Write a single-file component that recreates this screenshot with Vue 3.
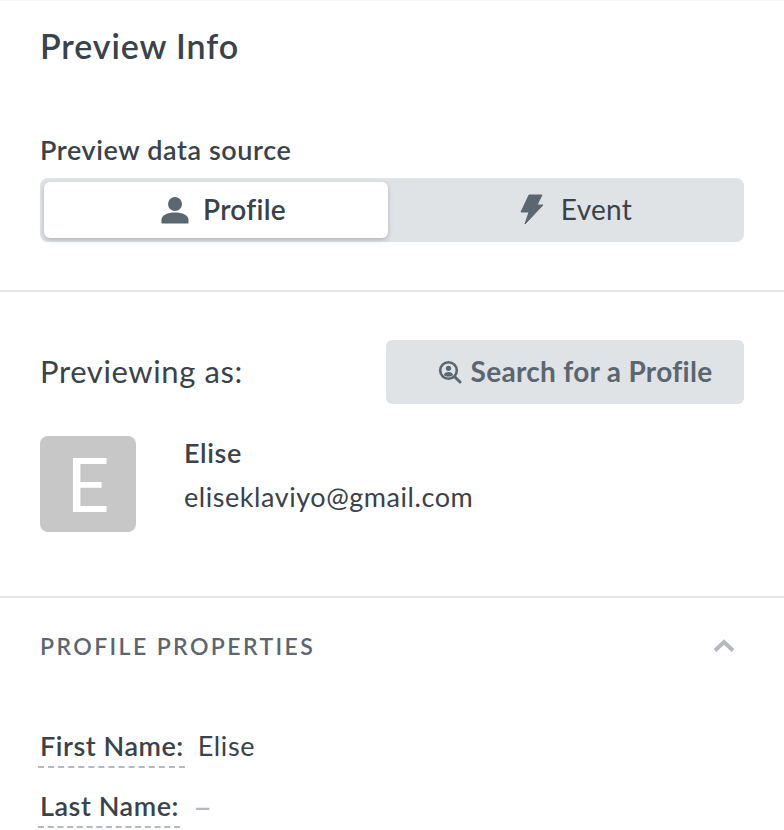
<script setup>
const props_ = [
  { label: 'First Name:', value: 'Elise', empty: false },
  { label: 'Last Name:', value: '–', empty: true },
]
</script>

<template>
  <div class="page">
    <section class="top">
      <h1 class="title">Preview Info</h1>
      <div class="field-label">Preview data source</div>
      <div class="toggle">
        <div class="opt active">
          <svg class="ico-person" viewBox="0 0 28 28" width="28" height="28">
            <circle cx="14" cy="8" r="7" fill="#5c6670" />
            <path d="M0.500 27.500v-3.600C0.500 19 6.500 16.400 14 16.400s13.500 2.600 13.500 7.500v3.600z" fill="#5c6670" />
          </svg>
          <span class="opt-text strong">Profile</span>
        </div>
        <div class="opt second">
          <svg class="ico-bolt" viewBox="0 0 24 32" width="24" height="32">
            <path d="M9 1H22L17 11H23L5 30L9 18H1Z" fill="#5c6670" stroke="#5c6670" stroke-linejoin="round" />
          </svg>
          <span class="opt-text">Event</span>
        </div>
      </div>
    </section>

    <section class="preview">
      <div class="preview-head">
        <span class="previewing">Previewing as:</span>
        <div class="search-btn">
          <svg class="ico-search" viewBox="0 0 24 24" width="24" height="24">
            <circle cx="10.500" cy="10.500" r="8.300" fill="none" stroke="#5c6670" stroke-width="2.600" />
            <circle cx="10.500" cy="8.300" r="2.600" fill="#5c6670" />
            <path d="M5.800 15c.5-2 2.500-3 4.700-3s4.200 1 4.700 3c-1.200 1-2.800 1.500-4.700 1.500S7 16 5.800 15z" fill="#5c6670" />
            <path d="M16.700 16.700l5.300 5.300" stroke="#5c6670" stroke-width="3" stroke-linecap="round" />
          </svg>
          <span class="search-text">Search for a Profile</span>
        </div>
      </div>
      <div class="person">
        <div class="avatar">E</div>
        <div class="person-info">
          <div class="person-name">Elise</div>
          <div class="person-mail">eliseklaviyo@gmail.com</div>
        </div>
      </div>
    </section>

    <section class="props">
      <div class="props-head">
        <span class="props-title">PROFILE PROPERTIES</span>
        <svg class="chev" viewBox="0 0 24 14" width="24" height="14">
          <path d="M3 11.500L12 3l9 8.500" fill="none" stroke="#b4bac0" stroke-width="4" />
        </svg>
      </div>
      <div v-for="p in props_" :key="p.label" class="prop">
        <span class="prop-label">{{ p.label }}</span>
        <span class="prop-value" :class="{ empty: p.empty }">{{ p.value }}</span>
      </div>
    </section>
  </div>
</template>

<style scoped>
.page {
  width: 784px;
  height: 830px;
  overflow: hidden;
  background: #fff;
  box-sizing: border-box;
  border-top: 1px solid #f3f4f5;
  font-family: "Lato", "Liberation Sans", sans-serif;
  color: #3a424a;
}
.top {
  padding: 0 40px 48px;
  border-bottom: 2px solid #e3e5e7;
}
.title {
  margin: 0;
  padding-top: 23px;
  font-size: 34px;
  line-height: 44px;
  font-weight: 600;
  letter-spacing: 0.9px;
}
.field-label {
  margin-top: 65px;
  font-size: 27px;
  line-height: 34px;
  font-weight: 600;
  letter-spacing: 0.6px;
}
.toggle {
  display: flex;
  margin-top: 11px;
  height: 64px;
  background: #e0e3e6;
  border-radius: 8px;
  padding: 4px;
  box-sizing: border-box;
}
.opt {
  flex: 1;
  display: flex;
  align-items: center;
  justify-content: center;
  gap: 14px;
}
.active {
  flex: none;
  width: 344px;
  box-sizing: border-box;
  padding-left: 15px;
  background: #fff;
  border-radius: 6px;
  box-shadow: 0 2px 5px rgba(55, 63, 71, 0.28);
}
.second {
  gap: 17px;
  padding-left: 24px;
}
.opt-text {
  margin-top: -2px;
  font-size: 28px;
  line-height: 34px;
  letter-spacing: 0.3px;
}
.strong {
  font-weight: 600;
}
.preview {
  padding: 48px 40px 64px;
  border-bottom: 2px solid #e3e5e7;
}
.preview-head {
  display: flex;
  align-items: center;
  justify-content: space-between;
}
.previewing {
  margin-top: -2px;
  font-size: 31px;
  line-height: 40px;
  letter-spacing: 0.6px;
}
.search-btn {
  display: flex;
  align-items: center;
  justify-content: center;
  gap: 9px;
  box-sizing: border-box;
  width: 358px;
  height: 64px;
  padding-left: 20px;
  background: #e0e3e6;
  border-radius: 6px;
  color: #5c6670;
  font-size: 28px;
  font-weight: 700;
  letter-spacing: 0.3px;
}
.search-text {
  margin-top: -2px;
}
.person {
  display: flex;
  margin-top: 32px;
}
.avatar {
  width: 96px;
  height: 96px;
  border-radius: 8px;
  background: #c7c7c7;
  color: #fff;
  font-size: 76px;
  line-height: 93px;
  text-align: center;
}
.person-info {
  margin-left: 48px;
}
.person-name {
  font-size: 27px;
  line-height: 34px;
  font-weight: 600;
  letter-spacing: 0.6px;
}
.person-mail {
  margin-top: 10px;
  font-size: 27px;
  line-height: 34px;
  letter-spacing: 0.55px;
}
.props {
  padding: 0 40px;
}
.props-head {
  display: flex;
  align-items: center;
  justify-content: space-between;
  height: 96px;
}
.props-title {
  font-size: 23px;
  font-weight: 600;
  letter-spacing: 2.4px;
  color: #5c6670;
}
.chev {
  margin-right: 8px;
}
.prop {
  display: flex;
  align-items: flex-start;
  height: 60px;
}
.prop-label {
  margin-left: -2px;
  padding: 0 1px 3px 2px;
  font-size: 27px;
  line-height: 34px;
  font-weight: 600;
  letter-spacing: 0.55px;
  border-bottom: 2px dashed #b4bac0;
}
.prop-value {
  margin-left: 13px;
  font-size: 27px;
  line-height: 34px;
  letter-spacing: 0.6px;
}
.prop-value.empty {
  font-size: 33px;
  color: #b4bac0;
}
.props-head + .prop {
  margin-top: 35px;
}
</style>
